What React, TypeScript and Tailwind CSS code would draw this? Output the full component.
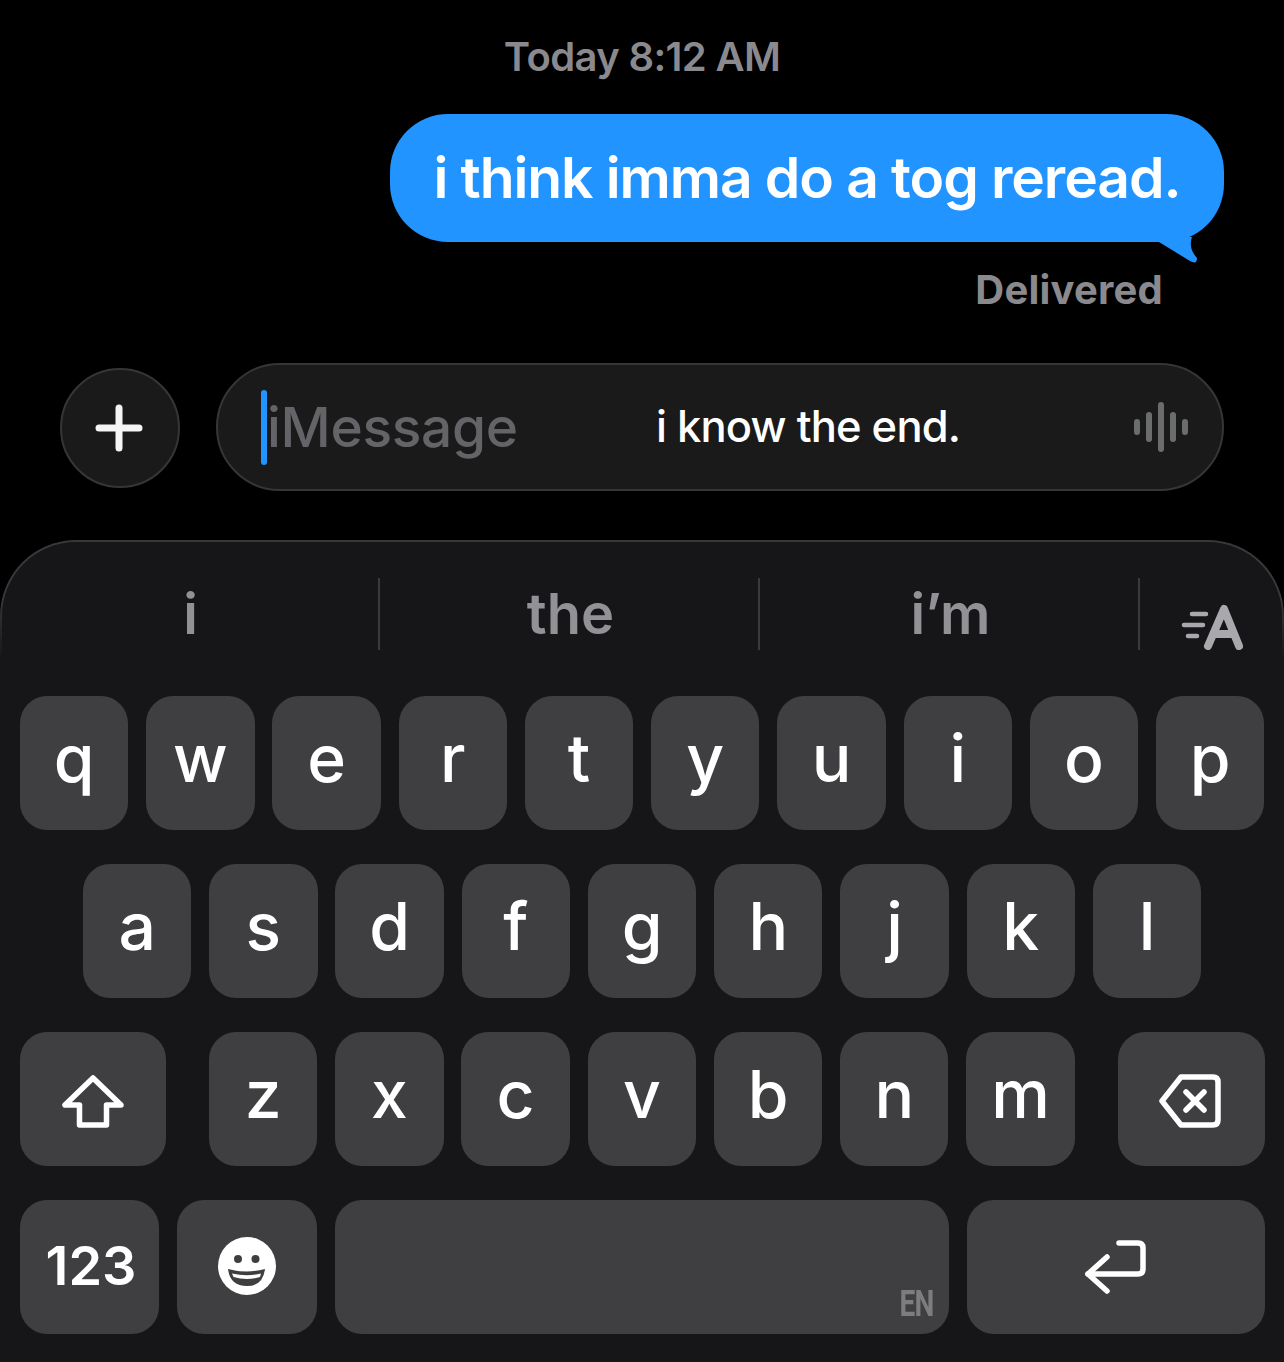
const row1 = ["q", "w", "e", "r", "t", "y", "u", "i", "o", "p"]
const row2 = ["a", "s", "d", "f", "g", "h", "j", "k", "l"]
const row3 = ["z", "x", "c", "v", "b", "n", "m"]

function Key({ label }: { label: string }) {
  return (
    <div className="flex h-[134px] w-[108.3px] items-center justify-center rounded-[27px] bg-[#3f3f41] pb-[11px] text-[66px] leading-none font-[450] text-white">
      {label}
    </div>
  )
}

function ShiftIcon() {
  return (
    <svg className="mt-[5px]" width="62" height="54" viewBox="0 0 62 54" fill="none" stroke="white" strokeWidth="5.5" strokeLinejoin="round">
      <path d="M31 3 L3 30 H17.5 V50 H44.5 V30 H59 Z" />
    </svg>
  )
}

function DeleteIcon() {
  return (
    <svg className="mt-[3px] mr-[2px]" width="62" height="54" viewBox="0 0 62 54" fill="none" stroke="white" strokeWidth="5.5" strokeLinecap="round" strokeLinejoin="round">
      <path d="M22 3 H54 Q59 3 59 8 V46 Q59 51 54 51 H22 L3 27 Z" />
      <path d="M27 18 L45 36 M45 18 L27 36" />
    </svg>
  )
}

function ReturnIcon() {
  return (
    <svg className="mr-[2px]" width="62" height="56" viewBox="0 0 62 56" fill="none" stroke="white" strokeWidth="5.5" strokeLinecap="round" strokeLinejoin="round">
      <path d="M35 4 H54 Q59 4 59 9 V30 Q59 35 54 35 H4" />
      <path d="M23 18 L4 35 L23 52" />
    </svg>
  )
}

function SmileIcon() {
  return (
    <svg className="mb-[2px]" width="58" height="58" viewBox="0 0 58 58">
      <circle cx="29" cy="29" r="29" fill="white" />
      <circle cx="20" cy="22" r="4" fill="#3f3f41" />
      <circle cx="37.5" cy="22" r="4" fill="#3f3f41" />
      <path d="M10 32 Q29 37 47 32 Q45 49 29 49 Q12 49 10 32 Z" fill="#3f3f41" />
      <path d="M14 36.5 Q29 40 43 36.5 L42 40 Q29 44 15.5 40 Z" fill="white" />
    </svg>
  )
}

function WriteIcon() {
  return (
    <svg width="62" height="46" viewBox="0 0 62 46" fill="none" strokeLinecap="round">
      <g stroke="#a9a9ad" strokeWidth="4.5">
        <path d="M11 10 H25 M3 21 H22 M7 32 H16" />
      </g>
      <g stroke="#a9a9ad" strokeWidth="8" strokeLinejoin="round">
        <path d="M27 42 L43 5 L58 42 M33 30 H53" />
      </g>
    </svg>
  )
}

export default function App() {
  return (
    <div className="flex h-[1362px] w-[1284px] flex-col overflow-hidden bg-black font-['Inter',sans-serif]">
      <p className="mt-[33px] text-center text-[40px] leading-[48px] font-semibold tracking-[-0.65px] text-[#8a8a8e]">
        Today 8:12 AM
      </p>

      <div className="relative mt-[33px] mr-[60px] ml-auto flex h-[128px] w-[834px] items-center justify-center rounded-[58px] bg-[#2294ff] text-[57px] font-semibold tracking-[-1.1px] text-white">
        i think imma do a tog reread.
        <svg className="absolute top-[100px] right-[4px]" width="70" height="56" viewBox="0 0 70 56">
          <path d="M9 28 L40 47 Q47 51 47 44 Q38 34 42 23 L9 20 Z" fill="#2294ff" />
        </svg>
      </div>

      <p className="mt-[26px] mr-[121px] text-right text-[40px] leading-[44px] font-bold tracking-[0.2px] text-[#8a8a8e]">
        Delivered
      </p>

      <div className="mt-[51px] flex items-center gap-[36px] px-[60px]">
        <div className="mt-[2px] flex h-[120px] w-[120px] items-center justify-center rounded-full border-2 border-[#363638] bg-[#1a1a1b] pr-[3px]">
          <svg width="48" height="48" viewBox="0 0 48 48" stroke="#f5f5f5" strokeWidth="7" strokeLinecap="round">
            <path d="M24 4 V44 M4 24 H44" />
          </svg>
        </div>
        <div className="flex h-[128px] flex-1 items-center rounded-[64px] border-2 border-[#363638] bg-[#1a1a1b] pr-[32px] pl-[43px]">
          <div className="h-[75px] w-[6px] rounded-full bg-[#2294ff]" />
          <span className="w-[389px] text-[55px] font-medium tracking-[-0.3px] text-[#646468]">iMessage</span>
          <span className="flex-1 text-[43.5px] font-medium tracking-[-0.8px] text-white">i know the end.</span>
          <svg width="56" height="50" viewBox="0 0 56 50" stroke="#6b6d6d" strokeWidth="6" strokeLinecap="round">
            <path d="M3 20 V30 M15 13 V37 M27 3 V47 M39 13 V37 M51 20 V30" />
          </svg>
        </div>
      </div>

      <div className="relative mt-[49px] flex flex-1 flex-col rounded-t-[76px] bg-[#161618]">
        <div className="pointer-events-none absolute inset-x-0 top-0 h-[120px] rounded-t-[76px] border-2 border-b-0 border-[#38383a] [mask-image:linear-gradient(to_bottom,black_50%,transparent)]" />
        <div className="mt-[38px] flex h-[72px] items-center">
          <div className="flex h-[72px] w-[380px] items-center justify-center border-r-2 border-[#3a3a3c] pl-[3px] text-[56px] font-semibold text-[#929296]">i</div>
          <div className="flex h-[72px] w-[380px] items-center justify-center border-r-2 border-[#3a3a3c] pl-[3px] text-[56px] font-semibold text-[#929296]">the</div>
          <div className="flex h-[72px] w-[380px] items-center justify-center border-r-2 border-[#3a3a3c] pl-[3px] text-[56px] font-semibold text-[#929296]">i’m</div>
          <div className="flex flex-1 justify-center pt-[26px]">
            <WriteIcon />
          </div>
        </div>

        <div className="mt-[46px] flex flex-col gap-[34px] pl-[20px]">
          <div className="flex gap-[17.95px]">
            {row1.map((k) => <Key key={k} label={k} />)}
          </div>
          <div className="flex gap-[17.95px] pl-[63px]">
            {row2.map((k) => <Key key={k} label={k} />)}
          </div>
          <div className="flex">
            <div className="mr-[43px] flex h-[134px] w-[146px] items-center justify-center rounded-[27px] bg-[#3f3f41]">
              <ShiftIcon />
            </div>
            <div className="flex gap-[17.95px]">
              {row3.map((k) => <Key key={k} label={k} />)}
            </div>
            <div className="ml-[43px] flex h-[134px] w-[147px] items-center justify-center rounded-[27px] bg-[#3f3f41]">
              <DeleteIcon />
            </div>
          </div>
          <div className="flex gap-[18px]">
            <div className="flex h-[134px] w-[139px] items-center justify-center rounded-[27px] bg-[#3f3f41] pb-[4px] pl-[3px] text-[54px] font-semibold text-white">
              123
            </div>
            <div className="flex h-[134px] w-[140px] items-center justify-center rounded-[27px] bg-[#3f3f41]">
              <SmileIcon />
            </div>
            <div className="flex h-[134px] w-[614px] items-end justify-end rounded-[27px] bg-[#3f3f41] pr-[15px] pb-[12px] font-['Roboto',sans-serif] text-[36px] leading-none font-bold tracking-[-1px] text-[#7d7d80]">
              <span className="inline-block origin-bottom-right scale-x-[0.78]">EN</span>
            </div>
            <div className="flex h-[134px] w-[298px] items-center justify-center rounded-[27px] bg-[#3f3f41]">
              <ReturnIcon />
            </div>
          </div>
        </div>
      </div>
    </div>
  )
}
